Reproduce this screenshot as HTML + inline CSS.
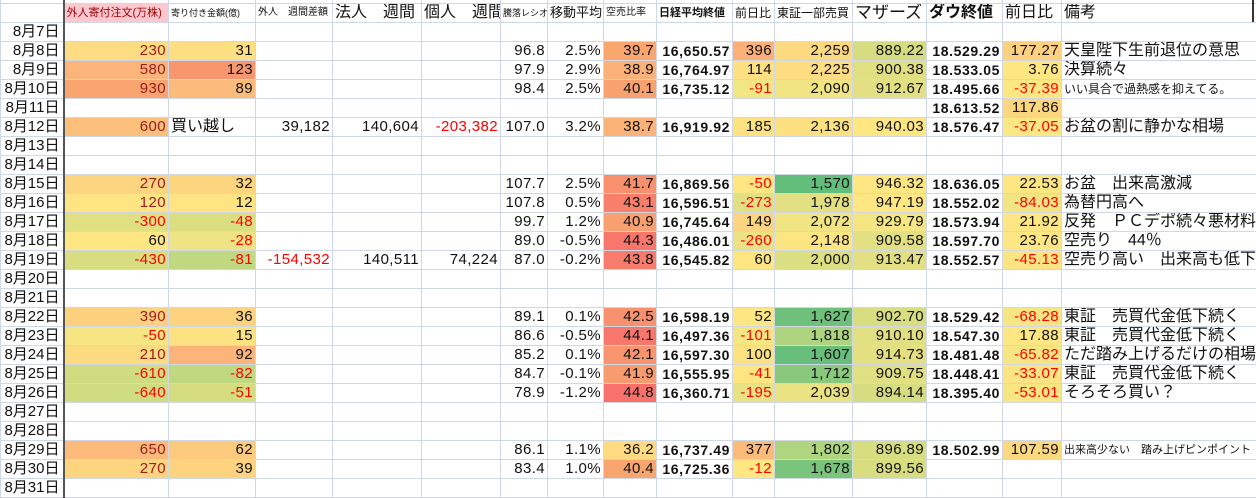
<!DOCTYPE html>
<html><head><meta charset="utf-8"><style>
body{margin:0;width:1256px;height:484px;overflow:hidden;background:#fff;font-family:"Liberation Sans","Noto Sans CJK JP",sans-serif;}
table{position:absolute;left:0;top:-16px;border-collapse:collapse;table-layout:fixed;width:1256px;}
td{border:1px solid #d0d7e5;height:18px;padding:0 2px;line-height:18px;font-size:15px;white-space:nowrap;overflow:hidden;text-align:right;color:#111;letter-spacing:0.4px;}
td:first-child{border-right:2px solid #555;padding-right:3px;letter-spacing:0}
td.l{text-align:left;letter-spacing:0;font-size:16px}
.r{color:#f00}.d{color:#9a1c1c}
.b{font-weight:bold;font-size:14px;letter-spacing:0.6px}
td.o{font-size:11px}
tr.h td{font-size:12px;text-align:left;letter-spacing:0}
#vl{position:absolute;left:1252px;top:0;width:2px;height:22px;background:#333}
</style></head><body>
<table>
<colgroup><col style="width:63px"><col style="width:105px"><col style="width:87px"><col style="width:77px"><col style="width:89px"><col style="width:79px"><col style="width:47px"><col style="width:56px"><col style="width:53px"><col style="width:76px"><col style="width:42px"><col style="width:78px"><col style="width:74px"><col style="width:76px"><col style="width:59px"><col style="width:195px"></colgroup>
<tr><td></td><td></td><td></td><td></td><td></td><td></td><td></td><td></td><td></td><td></td><td></td><td></td><td></td><td></td><td></td><td></td></tr>
<tr class="h"><td></td><td style="background:#ffc7ce;color:#9c0006;font-size:11px">外人寄付注文(万株)</td><td style="font-size:9px">寄り付き金額(億)</td><td style="font-size:10px">外人　週間差額</td><td style="font-size:16px">法人　週間</td><td style="font-size:16px">個人　週間</td><td style="font-size:9px">騰落レシオ</td><td style="font-size:13px">移動平均</td><td style="font-size:10px">空売比率</td><td style="font-size:11px;font-weight:bold">日経平均終値</td><td style="font-size:12px">前日比</td><td style="font-size:12px">東証一部売買</td><td style="font-size:17px">マザーズ</td><td style="font-size:16px;font-weight:bold">ダウ終値</td><td style="font-size:16px">前日比</td><td style="font-size:16px">備考</td></tr>
<tr><td>8月7日</td><td></td><td></td><td></td><td></td><td></td><td></td><td></td><td></td><td></td><td></td><td></td><td></td><td></td><td></td><td></td></tr>
<tr><td>8月8日</td><td class="d" style="background:#fedc81">230</td><td style="background:#fee082">31</td><td></td><td></td><td></td><td>96.8</td><td>2.5%</td><td style="background:#f9a66f">39.7</td><td class="b">16,650.57</td><td style="background:#fbb078">396</td><td style="background:#fdd980">2,259</td><td style="background:#d6dd80">889.22</td><td class="b">18.529.29</td><td style="background:#fdd17e">177.27</td><td class="l">天皇陛下生前退位の意思</td></tr>
<tr><td>8月9日</td><td class="d" style="background:#fbb57a">580</td><td style="background:#f8976e">123</td><td></td><td></td><td></td><td>97.9</td><td>2.9%</td><td style="background:#fbb178">38.9</td><td class="b">16,764.97</td><td style="background:#fedf82">114</td><td style="background:#fedc81">2,225</td><td style="background:#e0e082">900.38</td><td class="b">18.533.05</td><td style="background:#fee683">3.76</td><td class="l">決算続々</td></tr>
<tr><td>8月10日</td><td class="d" style="background:#f9a570">930</td><td style="background:#fbbb7b">89</td><td></td><td></td><td></td><td>98.4</td><td>2.5%</td><td style="background:#f9a16f">40.1</td><td class="b">16,735.12</td><td class="r" style="background:#f1e584">-91</td><td style="background:#f0e483">2,090</td><td style="background:#e2e082">912.67</td><td class="b">18.495.66</td><td class="r" style="background:#fee683">-37.39</td><td class="l" style="font-size:12px">いい具合で過熱感を抑えてる。</td></tr>
<tr><td>8月11日</td><td></td><td></td><td></td><td></td><td></td><td></td><td></td><td></td><td></td><td></td><td></td><td></td><td class="b">18.613.52</td><td style="background:#fdd680">117.86</td><td></td></tr>
<tr><td>8月12日</td><td class="d" style="background:#fcc07c">600</td><td class="l">買い越し</td><td>39,182</td><td>140,604</td><td class="r">-203,382</td><td>107.0</td><td>3.2%</td><td style="background:#fbb378">38.7</td><td class="b">16,919.92</td><td style="background:#fee282">185</td><td style="background:#fde181">2,136</td><td style="background:#fee683">940.03</td><td class="b">18.576.47</td><td class="r" style="background:#fde783">-37.05</td><td class="l">お盆の割に静かな相場</td></tr>
<tr><td>8月13日</td><td></td><td></td><td></td><td></td><td></td><td></td><td></td><td></td><td></td><td></td><td></td><td></td><td></td><td></td><td></td></tr>
<tr><td>8月14日</td><td></td><td></td><td></td><td></td><td></td><td></td><td></td><td></td><td></td><td></td><td></td><td></td><td></td><td></td><td></td></tr>
<tr><td>8月15日</td><td class="d" style="background:#fdd47f">270</td><td style="background:#fdd57f">32</td><td></td><td></td><td></td><td>107.7</td><td>2.5%</td><td style="background:#f8906d">41.7</td><td class="b">16,869.56</td><td class="r" style="background:#fee683">-50</td><td style="background:#63be7b">1,570</td><td style="background:#fee683">946.32</td><td class="b">18.636.05</td><td style="background:#fee683">22.53</td><td class="l">お盆　出来高激減</td></tr>
<tr><td>8月16日</td><td class="d" style="background:#fee482">120</td><td style="background:#fee482">12</td><td></td><td></td><td></td><td>107.8</td><td>0.5%</td><td style="background:#f8806b">43.1</td><td class="b">16,596.51</td><td class="r" style="background:#e1e082">-273</td><td style="background:#e2e082">1,978</td><td style="background:#fee683">947.19</td><td class="b">18.552.02</td><td class="r" style="background:#f0e483">-84.03</td><td class="l">為替円高へ</td></tr>
<tr><td>8月17日</td><td class="r" style="background:#e0e082">-300</td><td class="r" style="background:#dbdf81">-48</td><td></td><td></td><td></td><td>99.7</td><td>1.2%</td><td style="background:#f9a070">40.9</td><td class="b">16,745.64</td><td style="background:#fdd47f">149</td><td style="background:#f0e483">2,072</td><td style="background:#f5e683">929.79</td><td class="b">18.573.94</td><td style="background:#fee683">21.92</td><td class="l">反発　ＰＣデポ続々悪材料</td></tr>
<tr><td>8月18日</td><td style="background:#fee683">60</td><td class="r" style="background:#eee483">-28</td><td></td><td></td><td></td><td>89.0</td><td>-0.5%</td><td style="background:#f8776c">44.3</td><td class="b">16,486.01</td><td class="r" style="background:#ebe383">-260</td><td style="background:#fde582">2,148</td><td style="background:#e2e082">909.58</td><td class="b">18.597.70</td><td style="background:#fee683">23.76</td><td class="l">空売り　44％</td></tr>
<tr><td>8月19日</td><td class="r" style="background:#d8de80">-430</td><td class="r" style="background:#c0d980">-81</td><td class="r">-154,532</td><td>140,511</td><td>74,224</td><td>87.0</td><td>-0.2%</td><td style="background:#f87c6c">43.8</td><td class="b">16,545.82</td><td style="background:#fde582">60</td><td style="background:#dbdf81">2,000</td><td style="background:#e2e082">913.47</td><td class="b">18.552.57</td><td class="r" style="background:#fde483">-45.13</td><td class="l">空売り高い　出来高も低下</td></tr>
<tr><td>8月20日</td><td></td><td></td><td></td><td></td><td></td><td></td><td></td><td></td><td></td><td></td><td></td><td></td><td></td><td></td><td></td></tr>
<tr><td>8月21日</td><td></td><td></td><td></td><td></td><td></td><td></td><td></td><td></td><td></td><td></td><td></td><td></td><td></td><td></td><td></td></tr>
<tr><td>8月22日</td><td class="d" style="background:#fdd17e">390</td><td style="background:#fdd37f">36</td><td></td><td></td><td></td><td>89.1</td><td>0.1%</td><td style="background:#f8916d">42.5</td><td class="b">16,598.19</td><td style="background:#fee683">52</td><td style="background:#6ec07b">1,627</td><td style="background:#d8de80">902.70</td><td class="b">18.529.42</td><td class="r" style="background:#f5e583">-68.28</td><td class="l">東証　売買代金低下続く</td></tr>
<tr><td>8月23日</td><td class="r" style="background:#f5e683">-50</td><td style="background:#fee282">15</td><td></td><td></td><td></td><td>86.6</td><td>-0.5%</td><td style="background:#f8776c">44.1</td><td class="b">16,497.36</td><td class="r" style="background:#f5e683">-101</td><td style="background:#aed47f">1,818</td><td style="background:#e0e082">910.10</td><td class="b">18.547.30</td><td style="background:#fee683">17.88</td><td class="l">東証　売買代金低下続く</td></tr>
<tr><td>8月24日</td><td class="d" style="background:#fddb80">210</td><td style="background:#fbb47a">92</td><td></td><td></td><td></td><td>85.2</td><td>0.1%</td><td style="background:#f8956e">42.1</td><td class="b">16,597.30</td><td style="background:#fee282">100</td><td style="background:#67bf7b">1,607</td><td style="background:#e4e082">914.73</td><td class="b">18.481.48</td><td class="r" style="background:#f6e583">-65.82</td><td class="l">ただ踏み上げるだけの相場</td></tr>
<tr><td>8月25日</td><td class="r" style="background:#d0dc80">-610</td><td class="r" style="background:#c0d980">-82</td><td></td><td></td><td></td><td>84.7</td><td>-0.1%</td><td style="background:#f89b6f">41.9</td><td class="b">16,555.95</td><td class="r" style="background:#fee683">-41</td><td style="background:#8ac97d">1,712</td><td style="background:#e0e082">909.75</td><td class="b">18.448.41</td><td class="r" style="background:#fee383">-33.07</td><td class="l">東証　売買代金低下続く</td></tr>
<tr><td>8月26日</td><td class="r" style="background:#cfdc80">-640</td><td class="r" style="background:#d5dd80">-51</td><td></td><td></td><td></td><td>78.9</td><td>-1.2%</td><td style="background:#f8726b">44.8</td><td class="b">16,360.71</td><td class="r" style="background:#e9e282">-195</td><td style="background:#ebe383">2,039</td><td style="background:#d5dd80">894.14</td><td class="b">18.395.40</td><td class="r" style="background:#f8e683">-53.01</td><td class="l">そろそろ買い？</td></tr>
<tr><td>8月27日</td><td></td><td></td><td></td><td></td><td></td><td></td><td></td><td></td><td></td><td></td><td></td><td></td><td></td><td></td><td></td></tr>
<tr><td>8月28日</td><td></td><td></td><td></td><td></td><td></td><td></td><td></td><td></td><td></td><td></td><td></td><td></td><td></td><td></td><td></td></tr>
<tr><td>8月29日</td><td class="d" style="background:#fcbb7b">650</td><td style="background:#fdcb7e">62</td><td></td><td></td><td></td><td>86.1</td><td>1.1%</td><td style="background:#fedb81">36.2</td><td class="b">16,737.49</td><td style="background:#fcbb7b">377</td><td style="background:#b0d57f">1,802</td><td style="background:#d7de80">896.89</td><td class="b">18.502.99</td><td style="background:#fdd87f">107.59</td><td class="l o">出来高少ない　踏み上げピンポイント</td></tr>
<tr><td>8月30日</td><td class="d" style="background:#fdd57f">270</td><td style="background:#fdd37f">39</td><td></td><td></td><td></td><td>83.4</td><td>1.0%</td><td style="background:#f9a56f">40.4</td><td class="b">16,725.36</td><td class="r" style="background:#fee683">-12</td><td style="background:#7ac47c">1,678</td><td style="background:#d8de80">899.56</td><td></td><td></td><td></td></tr>
<tr><td>8月31日</td><td></td><td></td><td></td><td></td><td></td><td></td><td></td><td></td><td></td><td></td><td></td><td></td><td></td><td></td><td></td></tr>
</table>
<div id="vl"></div>
</body></html>
